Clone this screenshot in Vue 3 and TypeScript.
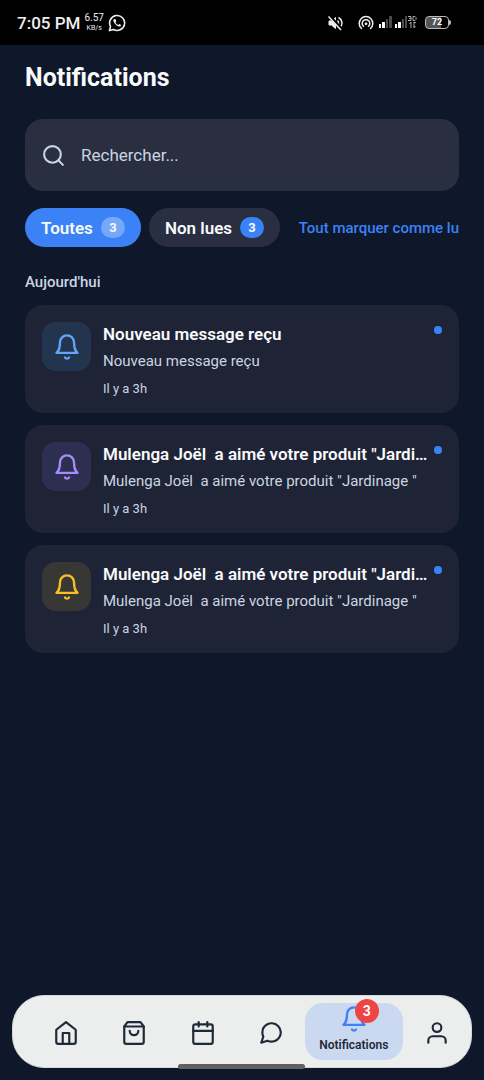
<script setup lang="ts">
import { ref } from 'vue'

interface Notice {
  id: number
  tone: 'blue' | 'violet' | 'amber'
  title: string
  body: string
  time: string
}

interface Tab {
  key: string
  label: string
  count: number
}

interface NavItem {
  key: string
  label: string
  paths: string[]
}

const query = ref<string>('')
const activeTab = ref<string>('all')

const tabs: Tab[] = [
  { key: 'all', label: 'Toutes', count: 3 },
  { key: 'unread', label: 'Non lues', count: 3 },
]

const notices: Notice[] = [
  { id: 1, tone: 'blue', title: 'Nouveau message reçu', body: 'Nouveau message reçu', time: 'Il y a 3h' },
  { id: 2, tone: 'violet', title: 'Mulenga Joël  a aimé votre produit "Jardinage "', body: 'Mulenga Joël  a aimé votre produit "Jardinage "', time: 'Il y a 3h' },
  { id: 3, tone: 'amber', title: 'Mulenga Joël  a aimé votre produit "Jardinage "', body: 'Mulenga Joël  a aimé votre produit "Jardinage "', time: 'Il y a 3h' },
]

const bell: string[] = ['M18 8A6 6 0 0 0 6 8c0 7-3 9-3 9h18s-3-2-3-9', 'M13.73 21a2 2 0 0 1-3.46 0']

const navItems: NavItem[] = [
  { key: 'home', label: 'Accueil', paths: ['M3 9l9-7 9 7v11a2 2 0 0 1-2 2H5a2 2 0 0 1-2-2z', 'M9 22V12h6v10'] },
  { key: 'shop', label: 'Boutique', paths: ['M6 2L3 6v14a2 2 0 0 0 2 2h14a2 2 0 0 0 2-2V6l-3-4z', 'M3 6h18', 'M16 10a4 4 0 0 1-8 0'] },
  { key: 'calendar', label: 'Calendrier', paths: ['M5 4h14a2 2 0 0 1 2 2v14a2 2 0 0 1-2 2H5a2 2 0 0 1-2-2V6a2 2 0 0 1 2-2z', 'M16 2v4', 'M8 2v4', 'M3 10h18'] },
  { key: 'chat', label: 'Messages', paths: ['M21 11.5a8.38 8.38 0 0 1-.9 3.8 8.5 8.5 0 0 1-7.6 4.7 8.38 8.38 0 0 1-3.8-.9L3 21l1.9-5.7a8.38 8.38 0 0 1-.9-3.8 8.5 8.5 0 0 1 4.7-7.6 8.38 8.38 0 0 1 3.8-.9h.5a8.48 8.48 0 0 1 8 8v.5z'] },
  { key: 'alerts', label: 'Notifications', paths: bell },
  { key: 'profile', label: 'Profil', paths: ['M20 21v-2a4 4 0 0 0-4-4H8a4 4 0 0 0-4 4v2', 'M12 3a4 4 0 1 0 0 8a4 4 0 1 0 0-8'] },
]
</script>

<template>
  <div class="screen">
    <div class="status">
      <span class="clock">7:05 PM</span>
      <span class="speed"><span>6.57</span><span class="unit">KB/s</span></span>
      <svg class="wa" viewBox="0 0 18 18" aria-hidden="true">
        <path d="M1.4 16.6l1.1-4.1A7.5 7.5 0 1 1 5.4 15.500z" fill="none" stroke="currentColor" stroke-width="1.6" stroke-linejoin="round" />
        <path d="M6.300 4.900c-.9.500-1.200 1.500-.7 2.700 1 2.400 2.700 4.100 5.100 4.900 1.200.4 2.300-.2 2.500-1.400l-2-1.200-1.100 1c-1.200-.5-2.100-1.400-2.600-2.500l.8-1.100-.9-2.200z" fill="currentColor" />
      </svg>
      <span class="grow"></span>
      <svg class="mute" viewBox="0 0 16 16" aria-hidden="true">
        <path d="M2 6h2.500l4-3.500v11L4.500 10H2z" fill="currentColor" stroke="currentColor" stroke-linejoin="round" />
        <path d="M10.500 5.500a3.500 3.500 0 0 1 0 5M11.500 2.500a6.200 6.200 0 0 1 1.500 10" fill="none" stroke="currentColor" stroke-width="1.5" />
        <path d="M2.500 1L15 14.500" stroke="#000" stroke-width="3" />
        <path d="M1.500 1.500L14 15" stroke="currentColor" stroke-width="1.5" />
      </svg>
      <svg class="cast" viewBox="0 0 16 16" fill="none" stroke="currentColor" stroke-width="1.5" stroke-linecap="round" aria-hidden="true">
        <path d="M3.500 13.500a6.800 6.800 0 1 1 9 0" />
        <path d="M5.500 11.300a3.800 3.800 0 1 1 5 0" />
        <circle cx="8" cy="8.800" r="1.400" fill="currentColor" stroke="none" />
      </svg>
      <svg class="signal" viewBox="0 0 38 14" aria-hidden="true">
        <g fill="#fff">
          <rect x="0" y="8" width="2" height="4" /><rect x="3" y="6" width="3" height="6" />
          <rect x="16" y="8" width="2" height="4" /><rect x="19" y="6" width="3" height="6" />
        </g>
        <g fill="#4a4a4a">
          <rect x="7" y="3" width="2" height="9" /><rect x="10" y="0" width="3" height="12" />
          <rect x="23" y="3" width="2" height="9" /><rect x="26" y="0" width="2" height="12" />
        </g>
        <g fill="none" stroke="#aaa">
          <path d="M29 .5h3v2h-2M32 2v2.500h-3M34 .5v4h2l1-1v-2l-1-1z" />
          <path d="M32 6v6M30.500 8l1.500-2M35 6v6M35 12l1.500-2M35 6.500h2" />
        </g>
      </svg>
      <span class="battery">72</span>
    </div>

    <main class="content">
      <h1>Notifications</h1>

      <label class="search">
        <svg viewBox="0 0 24 24" class="line" aria-hidden="true">
          <circle cx="11" cy="11" r="8" />
          <path d="M21 21l-4.350-4.350" />
        </svg>
        <input v-model="query" type="text" placeholder="Rechercher..." aria-label="Rechercher" />
      </label>

      <div class="filters">
        <button
          v-for="tab in tabs"
          :key="tab.key"
          type="button"
          class="tab"
          :class="{ active: tab.key === activeTab }"
          @click="activeTab = tab.key"
        >
          {{ tab.label }}<span class="count">{{ tab.count }}</span>
        </button>
        <button type="button" class="mark">Tout marquer comme lu</button>
      </div>

      <h2>Aujourd'hui</h2>

      <ul class="list">
        <li v-for="n in notices" :key="n.id" class="card">
          <span class="tile" :class="n.tone">
            <svg viewBox="0 0 24 24" class="line" aria-hidden="true">
              <path v-for="d in bell" :key="d" :d="d" />
            </svg>
          </span>
          <div class="text">
            <h3>{{ n.title }}</h3>
            <p class="body">{{ n.body }}</p>
            <p class="time">{{ n.time }}</p>
          </div>
          <span class="dot"></span>
        </li>
      </ul>
    </main>

    <nav class="bar">
      <button
        v-for="item in navItems"
        :key="item.key"
        type="button"
        class="nav-item"
        :class="{ current: item.key === 'alerts' }"
        :aria-label="item.label"
      >
        <span class="nav-icon">
          <svg viewBox="0 0 24 24" class="line" aria-hidden="true">
            <path v-for="d in item.paths" :key="d" :d="d" />
          </svg>
          <span v-if="item.key === 'alerts'" class="badge">3</span>
        </span>
        <span v-if="item.key === 'alerts'" class="nav-label">{{ item.label }}</span>
      </button>
    </nav>
    <span class="handle"></span>
  </div>
</template>

<style>
body {
  margin: 0;
  background: #0f172a;
}
</style>

<style scoped>
.screen {
  position: relative;
  display: flex;
  flex-direction: column;
  min-height: 100vh;
  background: #0f172a;
  color: #f8fafc;
  font-family: Roboto, "Liberation Sans", sans-serif;
}

h1, h2, h3, p, ul {
  margin: 0;
  padding: 0;
}

button, input {
  margin: 0;
  border: 0;
  font-family: inherit;
}

button {
  cursor: pointer;
}

.line {
  fill: none;
  stroke: currentColor;
  stroke-width: 2;
  stroke-linecap: round;
  stroke-linejoin: round;
}

.status {
  display: flex;
  align-items: center;
  box-sizing: border-box;
  height: 45px;
  padding: 0 35px 0 17px;
  background: #000;
  color: #eee;
}

.clock {
  font-size: 17px;
  font-weight: 500;
}

.speed {
  display: flex;
  flex-direction: column;
  align-items: center;
  margin: 0 4px;
  font-size: 10px;
  line-height: 12px;
}

.unit {
  font-size: 7px;
  line-height: 9px;
}

.wa {
  width: 18px;
  height: 18px;
}

.grow {
  flex: 1;
}

.mute {
  width: 16px;
  height: 16px;
  margin-right: 15px;
}

.cast {
  width: 16px;
  height: 16px;
  margin-right: 5px;
}

.signal {
  width: 38px;
  height: 14px;
  margin-right: 8px;
}

.battery {
  position: relative;
  box-sizing: border-box;
  width: 24px;
  height: 13px;
  border: 1px solid #bbb;
  border-radius: 4px;
  background: linear-gradient(90deg, #555 70%, #000 70%);
  color: #fff;
  font-size: 9px;
  font-weight: 700;
  line-height: 11px;
  text-align: center;
}

.battery::after {
  content: "";
  position: absolute;
  top: 3px;
  right: -3px;
  width: 2px;
  height: 5px;
  border-radius: 0 2px 2px 0;
  background: #bbb;
}

.content {
  flex: 1;
  padding: 17px 25px;
}

h1 {
  font-size: 25px;
  font-weight: 700;
  line-height: 32px;
}

.search {
  display: flex;
  align-items: center;
  gap: 15px;
  box-sizing: border-box;
  height: 72px;
  margin-top: 25px;
  padding: 0 16px;
  border-radius: 18px;
  background: #292e40;
  color: #cbd5e1;
}

.search svg {
  width: 25px;
  height: 25px;
}

.search input {
  flex: 1;
  min-width: 0;
  padding: 0;
  outline: 0;
  background: transparent;
  color: #f8fafc;
  font-size: 17px;
  line-height: 24px;
}

.search input::placeholder {
  color: #cbd5e1;
  opacity: 1;
}

.filters {
  display: flex;
  align-items: center;
  gap: 8px;
  margin-top: 17px;
}

.tab {
  display: flex;
  align-items: center;
  gap: 8px;
  height: 39px;
  padding: 0 16px;
  border-radius: 20px;
  background: #292e40;
  color: #f8fafc;
  font-size: 17px;
  font-weight: 600;
  white-space: nowrap;
}

.tab.active {
  background: #3b82f6;
}

.count {
  min-width: 24px;
  border-radius: 11px;
  background: #3b82f6;
  font-size: 13px;
  font-weight: 700;
  line-height: 21px;
  text-align: center;
}

.active .count {
  background: #76a7f9;
}

.mark {
  margin-left: auto;
  padding: 0;
  background: transparent;
  color: #3b82f6;
  font-size: 15px;
  font-weight: 500;
  white-space: nowrap;
}

h2 {
  margin-top: 25px;
  color: #cbd5e1;
  font-size: 15px;
  font-weight: 500;
  line-height: 20px;
}

.list {
  display: flex;
  flex-direction: column;
  gap: 12px;
  margin-top: 13px;
  list-style: none;
}

.card {
  display: flex;
  align-items: flex-start;
  padding: 17px;
  border-radius: 18px;
  background: #1e2335;
}

.tile {
  display: flex;
  flex: none;
  align-items: center;
  justify-content: center;
  width: 49px;
  height: 49px;
  margin-right: 12px;
  border-radius: 14px;
}

.tile svg {
  width: 28px;
  height: 28px;
}

.blue {
  background: #23344f;
  color: #60a5fa;
}

.violet {
  background: #2d2f50;
  color: #a78bfa;
}

.amber {
  background: #373735;
  color: #fbbf24;
}

.text {
  flex: 1;
  min-width: 0;
  white-space: pre;
}

h3 {
  overflow: hidden;
  font-size: 17px;
  font-weight: 600;
  line-height: 24px;
  text-overflow: ellipsis;
}

.body {
  overflow: hidden;
  margin-top: 4px;
  color: #cbd5e1;
  font-size: 15px;
  line-height: 22px;
  text-overflow: ellipsis;
}

.time {
  margin-top: 10px;
  color: #cbd5e1;
  font-size: 13px;
  line-height: 14px;
}

.dot {
  flex: none;
  width: 8px;
  height: 8px;
  margin: 4px 0 0 3px;
  border-radius: 50%;
  background: #3b82f6;
}

.bar {
  display: flex;
  align-items: center;
  margin: 0 12px 12px;
  padding: 7px 0 7px 19px;
  border: 1px solid #d5d7da;
  border-radius: 32px;
  background: #eceded;
}

.nav-item {
  display: flex;
  flex: 1;
  flex-direction: column;
  align-items: center;
  justify-content: center;
  min-width: 0;
  height: 57px;
  padding: 2px 0 0;
  background: transparent;
  color: #1f2937;
}

.nav-icon {
  position: relative;
  display: flex;
}

.nav-icon svg {
  width: 26px;
  height: 26px;
}

.current {
  flex: 0 0 98px;
  padding: 0 0 6px;
  border-radius: 18px;
  background: #cbd9f0;
}

.current .nav-icon {
  color: #3b82f6;
}

.current .nav-icon svg {
  width: 28px;
  height: 28px;
}

.nav-label {
  margin-top: 4px;
  color: #1f2937;
  font-size: 12px;
  font-weight: 600;
  line-height: 16px;
}

.badge {
  position: absolute;
  top: -6px;
  right: -11px;
  width: 24px;
  height: 24px;
  border-radius: 50%;
  background: #ef4444;
  color: #fff;
  font-size: 14px;
  font-weight: 700;
  line-height: 24px;
  text-align: center;
}

.handle {
  position: absolute;
  bottom: 11px;
  left: 50%;
  width: 127px;
  height: 5px;
  margin-left: -64px;
  border-radius: 3px;
  background: #606060;
}
</style>
